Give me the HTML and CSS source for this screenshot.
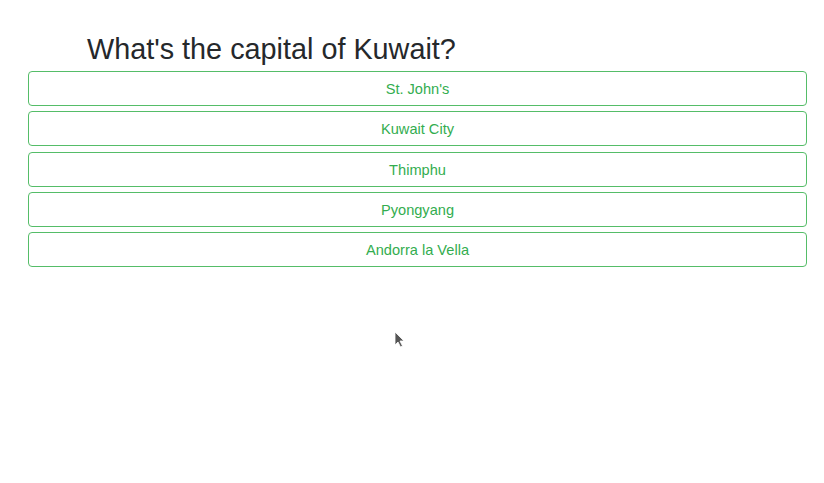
FILE: index.html
```html
<!DOCTYPE html>
<html>
<head>
<meta charset="utf-8">
<link rel="stylesheet" href="styles.css">
</head>
<body>
<div class="quiz">
  <h1 class="question">What's the capital of Kuwait?</h1>
  <div class="answers">
    <button class="answer">St. John's</button>
    <button class="answer">Kuwait City</button>
    <button class="answer">Thimphu</button>
    <button class="answer">Pyongyang</button>
    <button class="answer">Andorra la Vella</button>
  </div>
</div>
<svg class="cursor" width="12" height="18" viewBox="0 0 12 18"><path d="M1 1 L1 14 L4 11 L6.5 16 L8.5 15 L6 10 L10 10 Z" fill="#555" stroke="#fff" stroke-width="0.8"/></svg>
</body>
</html>
```
FILE: styles.css
```css
html, body { margin: 0; padding: 0; background: #fff; }
body { font-family: "Liberation Sans", Arial, sans-serif; color: #212529; }
.quiz { padding: 31px 17px 0 28px; }
.question { margin: 0 0 4px 59px; font-size: 28.8px; font-weight: 400; line-height: 36px; color: #25282b; }
.answers { display: flex; flex-direction: column; gap: 5.3px; }
.answer {
  display: block; width: 100%;
  font-family: "Liberation Sans", Arial, sans-serif; font-size: 14.6px; line-height: 21px;
  padding: 7px 12px 5px; background: #fff; color: #33ad4f;
  border: 1px solid #55bd68; border-radius: 4px; text-align: center;
}
.cursor { position: absolute; left: 394px; top: 331px; }
```
